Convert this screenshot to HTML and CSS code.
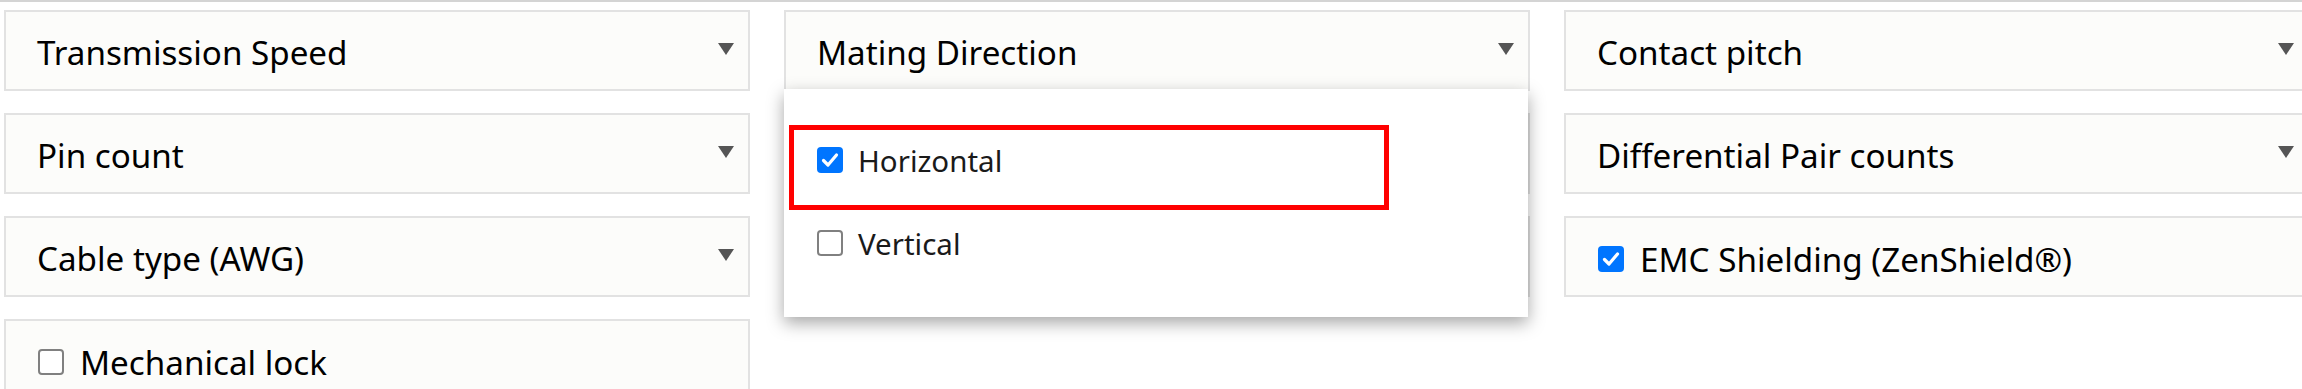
FILE: index.html
```html
<!DOCTYPE html>
<html>
<head>
<meta charset="utf-8">
<link rel="stylesheet" href="styles.css">
</head>
<body>
<div class="topline"></div>
<div class="filters">
  <div class="field select"><span class="label">Transmission Speed</span><span class="caret"></span></div>
  <div class="field select open">
    <span class="label">Mating Direction</span><span class="caret"></span>
    <div class="menu">
      <div class="option"><span class="cb checked"><svg viewBox="0 0 26 26" width="26" height="26"><polyline points="6.5,13.5 11,18 19.5,8" fill="none" stroke="#fff" stroke-width="3.2" stroke-linecap="round" stroke-linejoin="round"/></svg></span><span class="opt-text">Horizontal</span></div>
      <div class="option"><span class="cb"></span><span class="opt-text">Vertical</span></div>
      <div class="highlight"></div>
    </div>
  </div>
  <div class="field select"><span class="label">Contact pitch</span><span class="caret"></span></div>

  <div class="field select"><span class="label">Pin count</span><span class="caret"></span></div>
  <div class="field select"><span class="label"></span><span class="caret"></span></div>
  <div class="field select"><span class="label">Differential Pair counts</span><span class="caret"></span></div>

  <div class="field select"><span class="label">Cable type (AWG)</span><span class="caret"></span></div>
  <div class="field select"><span class="label"></span><span class="caret"></span></div>
  <div class="field check"><span class="cb checked"><svg viewBox="0 0 26 26" width="26" height="26"><polyline points="6.5,13.5 11,18 19.5,8" fill="none" stroke="#fff" stroke-width="3.2" stroke-linecap="round" stroke-linejoin="round"/></svg></span><span class="label">EMC Shielding (ZenShield®)</span></div>

  <div class="field check"><span class="cb"></span><span class="label">Mechanical lock</span></div>
</div>
</body>
</html>
```
FILE: styles.css
```css
html, body {
  margin: 0;
  padding: 0;
  background: #ffffff;
  overflow: hidden;
}
body {
  width: 2302px;
  height: 389px;
  font-family: "Noto Sans", "Open Sans", sans-serif;
  color: #000;
}
.topline {
  height: 2px;
  background: #d4d4d4;
}
.filters {
  display: grid;
  grid-template-columns: repeat(3, 746px);
  grid-auto-rows: 81px;
  column-gap: 34px;
  row-gap: 22px;
  padding: 8px 0 0 4px;
}
.field {
  position: relative;
  box-sizing: border-box;
  height: 81px;
  border: 2px solid #e2e2e2;
  background: #fcfcfa;
  display: flex;
  align-items: center;
  padding: 3px 14px 0 31px;
}
.label {
  font-size: 33.2px;
  line-height: 45px;
  white-space: nowrap;
}
.select .label {
  flex: 1;
}
.caret {
  width: 0;
  height: 0;
  border-left: 8px solid transparent;
  border-right: 8px solid transparent;
  border-top: 12px solid #555;
  margin-top: -6px;
}
.check {
  padding-left: 31px;
  padding-top: 5px;
}
.check .cb {
  margin-right: 16px;
  margin-left: 1px;
}
.cb {
  box-sizing: border-box;
  flex: none;
  width: 26px;
  height: 26px;
  border: 2px solid #808080;
  border-radius: 4px;
  background: #fff;
  display: inline-flex;
  align-items: center;
  justify-content: center;
}
.cb.checked {
  background: #0075ff;
  border: none;
}
.cb svg {
  display: block;
}
.menu {
  position: absolute;
  left: -2px;
  top: 77px;
  width: 744px;
  height: 228px;
  box-sizing: border-box;
  background: #fff;
  box-shadow: 0 6px 16px rgba(0, 0, 0, 0.35);
  z-index: 5;
  padding: 29px 0 0 33px;
}
.option {
  display: flex;
  align-items: center;
  height: 83px;
}
.option .cb {
  margin-right: 15px;
}
.opt-text {
  font-size: 29.5px;
  line-height: 38px;
  color: #1a1a1a;
  padding-top: 2px;
}
.highlight {
  position: absolute;
  left: 5px;
  top: 36px;
  width: 600px;
  height: 85px;
  box-sizing: border-box;
  border: 5px solid #ff0000;
}
```
